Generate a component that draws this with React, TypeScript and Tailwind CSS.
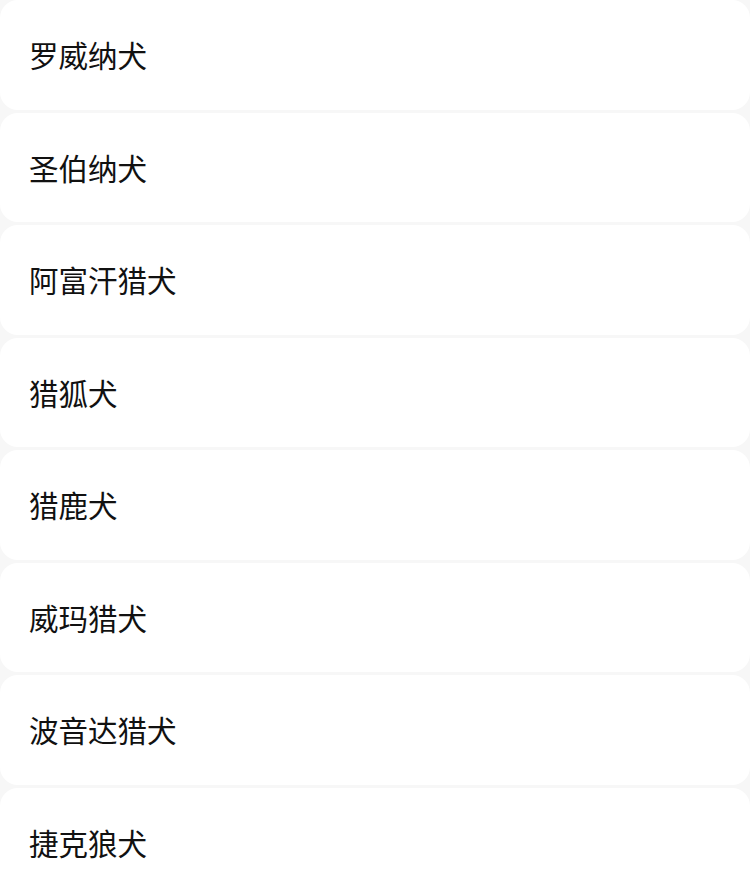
const breeds = [
  "罗威纳犬",
  "圣伯纳犬",
  "阿富汗猎犬",
  "猎狐犬",
  "猎鹿犬",
  "威玛猎犬",
  "波音达猎犬",
  "捷克狼犬",
];

export default function App() {
  return (
    <div className="h-[872px] bg-[#f7f7f7] flex flex-col gap-[3px] overflow-hidden">
      {breeds.map((name) => (
        <div
          key={name}
          className="h-[109.5px] shrink-0 bg-white rounded-[18px] flex items-center pl-[29px] pr-[30px]"
        >
          <span
            className="text-[29.5px] leading-none text-[#111]"
            style={{ fontFamily: '"Noto Sans CJK SC", "Noto Sans", sans-serif' }}
          >
            {name}
          </span>
        </div>
      ))}
    </div>
  );
}
